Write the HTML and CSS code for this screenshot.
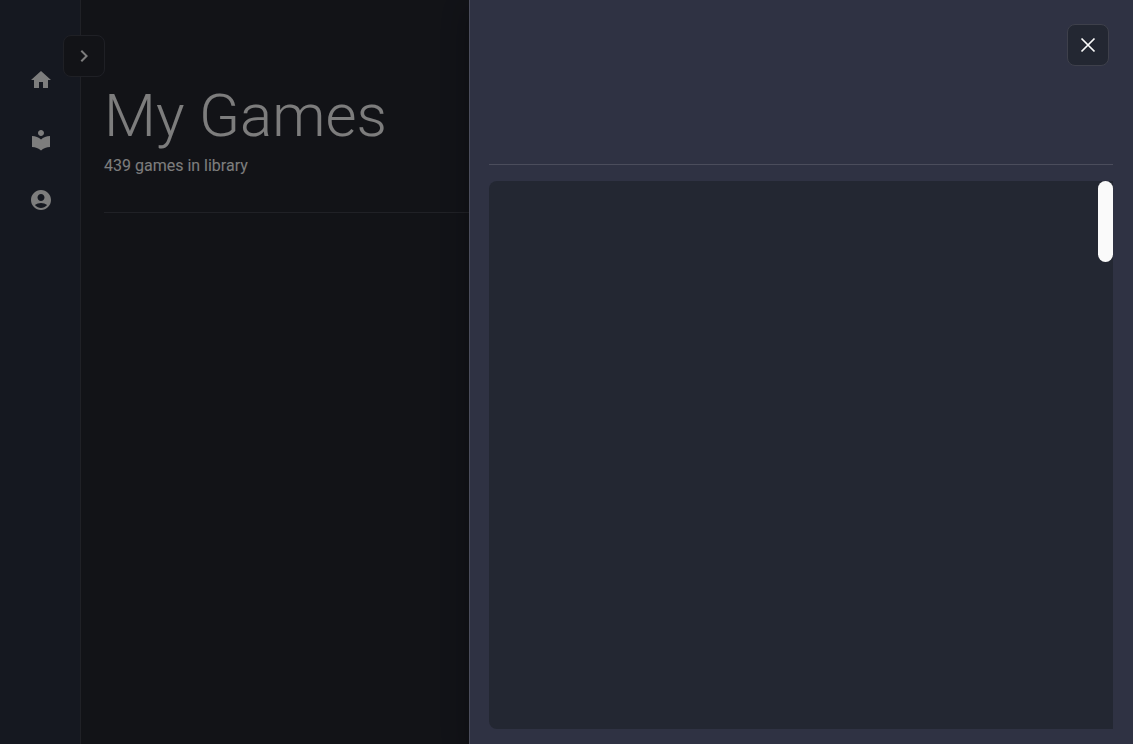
FILE: index.html
```html
<!DOCTYPE html>
<html lang="en">
<head>
  <meta charset="utf-8">
  <meta name="viewport" content="width=device-width, initial-scale=1">
  <title>My Games</title>
  <link rel="stylesheet" href="styles.css">
</head>
<body>
  <div class="app">
    <nav class="sidebar" aria-label="Main">
      <button class="icon-button sidebar-toggle" type="button" aria-label="Expand menu">
        <svg class="icon" viewBox="0 0 24 24" aria-hidden="true"><path d="M10 6 8.59 7.41 13.17 12l-4.58 4.59L10 18l6-6z"/></svg>
      </button>
      <a class="nav-link" href="#home" aria-label="Home">
        <svg class="icon" viewBox="0 0 24 24" aria-hidden="true"><path d="M10 20v-6h4v6h5v-8h3L12 3 2 12h3v8z"/></svg>
      </a>
      <a class="nav-link" href="#library" aria-label="Library">
        <svg class="icon" viewBox="0 0 24 24" aria-hidden="true"><path d="M12 11.55C9.64 9.35 6.48 8 3 8v11c3.48 0 6.64 1.35 9 3.55 2.36-2.19 5.52-3.55 9-3.55V8c-3.48 0-6.64 1.35-9 3.55zM12 8c1.66 0 3-1.34 3-3s-1.34-3-3-3-3 1.34-3 3 1.34 3 3 3z"/></svg>
      </a>
      <a class="nav-link" href="#account" aria-label="Account">
        <svg class="icon" viewBox="0 0 24 24" aria-hidden="true"><path d="M12 2C6.48 2 2 6.48 2 12s4.48 10 10 10 10-4.48 10-10S17.52 2 12 2zm0 4c1.93 0 3.5 1.57 3.5 3.5S13.93 13 12 13s-3.5-1.57-3.5-3.5S10.07 6 12 6zm0 14c-2.03 0-4.43-.82-6.14-2.88C7.55 15.8 9.68 15 12 15s4.45.8 6.14 2.12C16.43 19.18 14.03 20 12 20z"/></svg>
      </a>
    </nav>
    <main class="content">
      <header class="page-header">
        <h1 class="title">My Games</h1>
        <p class="subtitle">439 games in library</p>
      </header>
    </main>
  </div>
  <div class="backdrop"></div>
  <aside class="drawer" role="dialog" aria-label="Game details">
    <header class="drawer-header">
      <button class="icon-button" type="button" aria-label="Close">
        <svg class="icon icon-outline" viewBox="0 0 24 24" aria-hidden="true"><path d="M5.500 5.500l13 13M18.500 5.500l-13 13"/></svg>
      </button>
    </header>
    <section class="panel">
      <div class="scroll-thumb"></div>
    </section>
  </aside>
</body>
</html>
```
FILE: styles.css
```css
* {
  box-sizing: border-box;
}

body {
  margin: 0;
  background: #24262f;
  color: #fafafa;
  font-family: Roboto, "Liberation Sans", sans-serif;
  overflow: hidden;
}

.app {
  display: flex;
  min-height: 100vh;
}

.sidebar {
  position: relative;
  display: flex;
  flex-direction: column;
  align-items: center;
  gap: 36px;
  width: 81px;
  padding: 68px 0 0 2px;
  background: #2b3040;
  border-right: 1px solid #41434d;
}

.nav-link {
  display: block;
  height: 24px;
  color: inherit;
}

.icon {
  display: block;
  width: 24px;
  height: 24px;
  fill: currentColor;
}

.icon-outline {
  fill: none;
  stroke: currentColor;
  stroke-width: 1.7;
}

.icon-button {
  display: grid;
  place-items: center;
  width: 42px;
  height: 42px;
  padding: 0;
  color: #fafafa;
  background: #232732;
  border: 1px solid #3e404b;
  border-radius: 8px;
}

.sidebar-toggle {
  position: absolute;
  top: 35px;
  right: -25px;
  background: #24262f;
}

.content {
  flex: 1;
  padding: 78px 24px 24px 23px;
}

.page-header {
  padding-bottom: 34px;
  border-bottom: 1px solid #41434d;
}

.title {
  margin: 0;
  font-size: 60px;
  font-weight: 300;
  line-height: 76px;
}

.subtitle {
  margin: 0;
  font-size: 16px;
  line-height: 24px;
}

.backdrop {
  position: fixed;
  inset: 0;
  background: rgba(0, 0, 0, 0.5);
}

.drawer {
  position: fixed;
  inset: 0 0 0 auto;
  display: flex;
  flex-direction: column;
  gap: 16px;
  width: 664px;
  max-width: 100%;
  padding: 24px 20px 15px 19px;
  background: #2f3243;
  border-left: 1px solid #4b4d5c;
  box-shadow: 0 8px 10px -5px rgba(0, 0, 0, 0.2),
    0 16px 24px 2px rgba(0, 0, 0, 0.14),
    0 6px 30px 5px rgba(0, 0, 0, 0.12);
}

.drawer-header {
  display: flex;
  justify-content: flex-end;
  padding: 0 4px 98px 0;
  border-bottom: 1px solid #4b4d5c;
}

.panel {
  display: flex;
  flex: 1;
  justify-content: flex-end;
  background: #232732;
  border-radius: 8px 0 0 8px;
}

.scroll-thumb {
  width: 15px;
  height: 81px;
  background: #fafafa;
  border-radius: 8px;
}
```
